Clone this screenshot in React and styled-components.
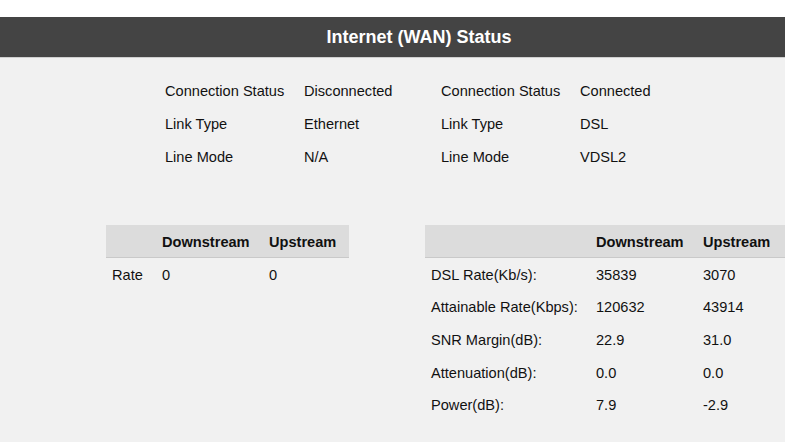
import React from "react";
import styled, { createGlobalStyle } from "styled-components";

const GlobalStyle = createGlobalStyle`
  html, body {
    margin: 0;
    padding: 0;
    overflow: hidden;
    background: #ffffff;
  }
  body {
    font-family: "Liberation Sans", Arial, sans-serif;
    color: #111;
  }
`;

const Viewport = styled.div`
  width: 100vw;
  height: 100vh;
  overflow: hidden;
`;

const Page = styled.div`
  width: 838px;
  padding-top: 17px;
`;

const TitleBar = styled.div`
  height: 39px;
  background: #444444;
  border-bottom: 1px solid #cfcfcf;
  display: flex;
  align-items: center;
  justify-content: center;
  padding-top: 1px;
  box-sizing: content-box;
  color: #fff;
  font-size: 18px;
  font-weight: bold;
`;

const Body = styled.div`
  background: #f1f1f1;
  height: 385px;
  padding-top: 16px;
  box-sizing: border-box;
`;

const InfoGrid = styled.div`
  display: grid;
  grid-template-columns: 139px 137px 139px 1fr;
  grid-auto-rows: 33px;
  align-items: center;
  padding-left: 165px;
  font-size: 14.6px;
`;

const Tables = styled.div`
  display: flex;
  align-items: flex-start;
  gap: 76px;
  padding-left: 106px;
  margin-top: 52px;
`;

const Table = styled.table`
  border-collapse: collapse;
  width: ${(p) => p.$width}px;
  font-size: 14.6px;
  table-layout: fixed;

  th {
    background: #dcdcdc;
    border-bottom: 1px solid #c9c9c9;
    height: 31px;
    font-weight: bold;
    text-align: left;
    padding: 1px 6px 0;
  }

  td {
    height: 31.6px;
    padding: 1px 6px 0;
    text-align: left;
  }
`;

const Col = styled.col`
  width: ${(p) => (p.$w ? `${p.$w}px` : "auto")};
`;

const wanInfo = [
  ["Connection Status", "Disconnected", "Connection Status", "Connected"],
  ["Link Type", "Ethernet", "Link Type", "DSL"],
  ["Line Mode", "N/A", "Line Mode", "VDSL2"],
];

const dslRows = [
  ["DSL Rate(Kb/s):", "35839", "3070"],
  ["Attainable Rate(Kbps):", "120632", "43914"],
  ["SNR Margin(dB):", "22.9", "31.0"],
  ["Attenuation(dB):", "0.0", "0.0"],
  ["Power(dB):", "7.9", "-2.9"],
];

const RateTable = ({ width, labelWidth, rows }) => (
  <Table $width={width}>
    <colgroup>
      <Col $w={labelWidth} />
      <Col $w={107} />
      <Col />
    </colgroup>
    <thead>
      <tr>
        <th></th>
        <th>Downstream</th>
        <th>Upstream</th>
      </tr>
    </thead>
    <tbody>
      {rows.map((r) => (
        <tr key={r[0]}>
          {r.map((c, i) => (
            <td key={i}>{c}</td>
          ))}
        </tr>
      ))}
    </tbody>
  </Table>
);

export default function App() {
  return (
    <Viewport>
      <GlobalStyle />
      <Page>
        <TitleBar>Internet (WAN) Status</TitleBar>
        <Body>
          <InfoGrid>
            {wanInfo.flat().map((t, i) => (
              <span key={i}>{t}</span>
            ))}
          </InfoGrid>
          <Tables>
            <RateTable width={243} labelWidth={50} rows={[["Rate", "0", "0"]]} />
            <RateTable width={413} labelWidth={165} rows={dslRows} />
          </Tables>
        </Body>
      </Page>
    </Viewport>
  );
}
